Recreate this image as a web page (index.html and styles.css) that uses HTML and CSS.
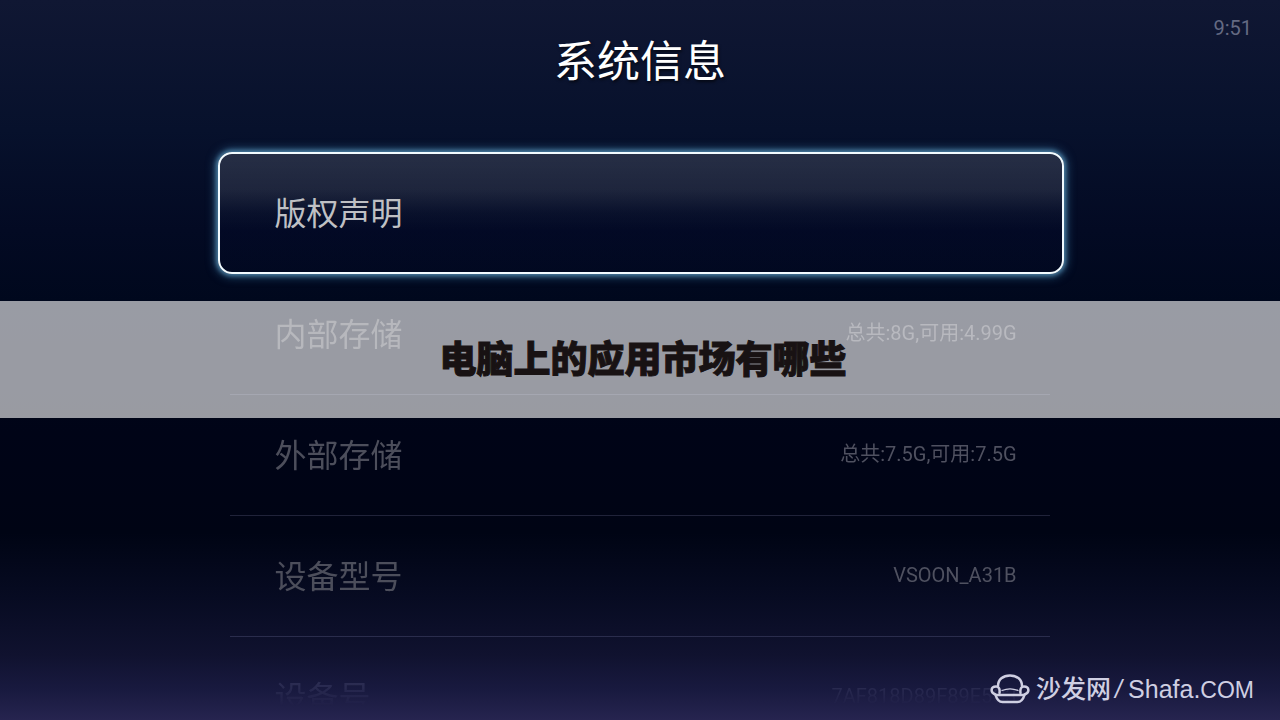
FILE: index.html
```
<!DOCTYPE html>
<html lang="zh-CN">
<head>
<meta charset="utf-8">
<title>系统信息</title>
<link rel="stylesheet" href="styles.css">
</head>
<body>
<div class="screen">
  <header class="header">
    <h1 class="title">系统信息</h1>
    <time class="clock">9:51</time>
  </header>
  <main class="content">
    <button class="row row-focused" type="button"><span class="label">版权声明</span></button>
    <dl class="list">
      <div class="row"><dt class="label">内部存储</dt><dd class="value">总共:8G,可用:4.99G</dd></div>
      <div class="row"><dt class="label">外部存储</dt><dd class="value">总共:7.5G,可用:7.5G</dd></div>
      <div class="row"><dt class="label">设备型号</dt><dd class="value">VSOON_A31B</dd></div>
      <div class="row row-fading"><dt class="label">设备号</dt><dd class="value">7AF818D89F89E5C3</dd></div>
    </dl>
  </main>
  <div class="banner">电脑上的应用市场有哪些</div>
  <div class="brand">
    <svg class="brand-icon" viewBox="0 0 40 30" aria-hidden="true">
      <path d="M8 12C8 5.500 13 1.500 20 1.500S32 5.500 32 12"/>
      <path d="M9.500 19C10 15 9 12.500 6 12.500 .5 12.500 0 19 5.500 20.500M30.500 19C30 15 31 12.500 34 12.500 39.500 12.500 40 19 34.500 20.500"/>
      <path d="M12 16.500c5-2 11-2 16 0" stroke-width="1.300"/>
      <path d="M5.500 21h29c-1.500 5-3.500 7-7 7h-15c-3.500 0-5.500-2-7-7z"/>
    </svg>
    <span class="brand-cn">沙发网</span><span class="brand-slash">/</span><span class="brand-en">Shafa.</span><span class="brand-com">COM</span>
  </div>
</div>
</body>
</html>
```
FILE: styles.css
```
* {
  box-sizing: border-box;
}

body {
  margin: 0;
  font-family: Roboto, "Noto Sans CJK SC", sans-serif;
  color: #fff;
}

.screen {
  position: relative;
  height: 100vh;
  overflow: hidden;
  background: linear-gradient(#101733 0%, #07112c 18%, #030a23 32%, #00081d 42%, #000417 60%, #000414 74%, #070b22 83%, #10122f 91%, #191a40 96%, #26244f 100%);
}

.header {
  display: grid;
  grid-template-columns: 1fr auto 1fr;
  padding: 16px 28px 0;
  height: 153px;
}

.title {
  grid-column: 2;
  margin: 18px 0 0;
  font-size: 43px;
  font-weight: 400;
  line-height: 56px;
  height: 56px;
  text-shadow: 1px 2px 3px rgba(0, 0, 0, 0.6);
}

.clock {
  justify-self: end;
  font-size: 20px;
  line-height: 24px;
  color: #646a82;
}

.content {
  width: 64%;
  margin: 0 auto;
}

.list {
  margin: 0;
  -webkit-mask-image: linear-gradient(#000 410px, transparent 432px);
  mask-image: linear-gradient(#000 410px, transparent 432px);
}

.row {
  display: flex;
  align-items: center;
  justify-content: space-between;
  height: 121px;
  padding: 2px 33px 0 44px;
  border-bottom: 1px solid rgba(200, 200, 255, 0.16);
}

.row-focused {
  width: calc(100% + 26px);
  height: 122px;
  margin: -1px -12px 0;
  padding: 2px 54px 0;
  border: 2px solid #f2fbff;
  border-radius: 14px;
  background: linear-gradient(rgba(255, 255, 255, 0.13), rgba(255, 255, 255, 0.1) 30%, rgba(100, 110, 160, 0.06) 50%, rgba(0, 6, 50, 0.15) 65%, rgba(0, 8, 40, 0.15));
  box-shadow: 0 0 4px 2px rgba(120, 190, 225, 0.5), 0 0 10px 3px rgba(70, 140, 190, 0.5);
  font-family: inherit;
}

.label {
  font-size: 32px;
  line-height: 48px;
  color: #4c4e5b;
}

.row-focused .label {
  color: #bfc0c4;
}

.row-fading .label,
.row-fading .value {
  color: rgba(110, 110, 150, 0.24);
}

.value {
  margin: 0;
  padding-bottom: 4px;
  font-size: 20px;
  line-height: 28px;
  color: #4f5160;
}

.banner {
  position: absolute;
  top: 301px;
  left: 0;
  right: 0;
  padding: 28px 0 33px 6px;
  background: rgba(255, 255, 255, 0.6);
  color: #181213;
  font-family: "Noto Sans CJK SC", sans-serif;
  font-size: 37px;
  font-weight: 900;
  line-height: 56px;
  text-align: center;
  -webkit-text-stroke: 1px #181213;
}

.brand {
  position: absolute;
  right: 26px;
  bottom: 14px;
  display: flex;
  align-items: baseline;
  color: #cfcfe2;
  font-family: "Liberation Sans", "Noto Sans CJK SC", sans-serif;
  line-height: 32px;
}

.brand-icon {
  align-self: center;
  width: 40px;
  height: 30px;
  margin-right: 6px;
  fill: none;
  stroke: currentColor;
  stroke-width: 2.5;
  stroke-linecap: round;
}

.brand-cn {
  font-family: "Noto Sans CJK SC", sans-serif;
  font-size: 25px;
  font-weight: 500;
}

.brand-slash {
  margin: 0 6px 0 4px;
  font-size: 25px;
  font-style: italic;
}

.brand-en {
  font-size: 25px;
}

.brand-com {
  font-size: 23px;
}
```
